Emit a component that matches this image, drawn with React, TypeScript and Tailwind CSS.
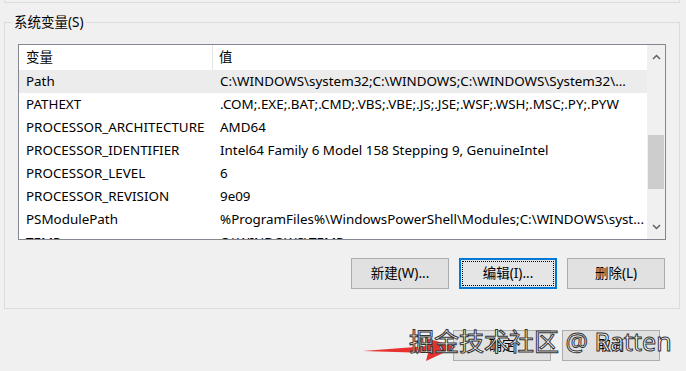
import React from "react";

const rows: [string, string][] = [
  ["Path", "C:\\WINDOWS\\system32;C:\\WINDOWS;C:\\WINDOWS\\System32\\..."],
  ["PATHEXT", ".COM;.EXE;.BAT;.CMD;.VBS;.VBE;.JS;.JSE;.WSF;.WSH;.MSC;.PY;.PYW"],
  ["PROCESSOR_ARCHITECTURE", "AMD64"],
  ["PROCESSOR_IDENTIFIER", "Intel64 Family 6 Model 158 Stepping 9, GenuineIntel"],
  ["PROCESSOR_LEVEL", "6"],
  ["PROCESSOR_REVISION", "9e09"],
  ["PSModulePath", "%ProgramFiles%\\WindowsPowerShell\\Modules;C:\\WINDOWS\\syst..."],
  ["TEMP", "C:\\WINDOWS\\TEMP"],
];

function Btn({ label, focused }: { label: string; focused?: boolean }) {
  if (focused) {
    return (
      <div className="w-[98px] h-[31px] border-2 border-[#0078d7] bg-[#e5e5e5] p-[1px]">
        <div className="w-full h-full border border-dotted border-black flex items-center justify-center text-[13.5px] text-black">
          {label}
        </div>
      </div>
    );
  }
  return (
    <div className="w-[98px] h-[31px] border border-[#adadad] bg-[#e1e1e1] flex items-center justify-center text-[13.5px] text-black">
      {label}
    </div>
  );
}

export default function App() {
  return (
    <div
      className="relative w-[686px] h-[371px] overflow-hidden bg-[#f0f0f0] text-black"
      style={{ fontFamily: '"Noto Sans", "Noto Sans CJK SC", sans-serif' }}
    >
      {/* previous group box bottom edge */}
      <div className="ml-[4px] w-[676px] h-[3px] border-x border-b border-[#dcdcdc]" />

      {/* system variables group */}
      <div className="relative mt-[19px] ml-[4px] w-[676px] h-[287px] border border-[#dcdcdc]">
        <div className="absolute left-[7px] top-[-12px] px-[2px] bg-[#f0f0f0] text-[13.5px] leading-[22px]">
          系统变量(S)
        </div>
        <div className="pl-[13px] pt-[21px]">
          <div className="flex w-[648px] h-[196px] border border-[#828790] bg-white overflow-hidden">
            <div className="flex-1 min-w-0 flex flex-col overflow-hidden">
              <div className="flex h-[25px] shrink-0 text-[13.4px] items-center">
                <div className="w-[194px] shrink-0 pl-[7px] h-full flex items-center border-r border-[#e5e5e5]">变量</div>
                <div className="pl-[6px]">值</div>
              </div>
              {rows.map(([k, v], i) => (
                <div
                  key={k}
                  className={
                    i === 0
                      ? "flex h-[23px] shrink-0 items-center text-[13.4px] bg-[#ececec] whitespace-nowrap"
                      : "flex h-[23px] shrink-0 items-center text-[13.4px] whitespace-nowrap"
                  }
                >
                  <div className="w-[194px] shrink-0 pl-[7px] overflow-hidden">{k}</div>
                  <div className="w-[434px] shrink-0 pl-[7px] overflow-hidden">{v}</div>
                </div>
              ))}
            </div>
            {/* scrollbar */}
            <div className="w-[18px] shrink-0 bg-[#f0f0f0] flex flex-col items-center">
              <div className="h-[24px] w-full flex items-center justify-center">
                <svg width="9" height="6" viewBox="0 0 9 6">
                  <path d="M1 5 L4.5 1.5 L8 5" fill="none" stroke="#606060" strokeWidth="1.5" />
                </svg>
              </div>
              <div className="mt-[66px] w-[16px] h-[54px] bg-[#cdcdcd]" />
              <div className="flex-1" />
              <div className="h-[24px] w-full flex items-center justify-center">
                <svg width="9" height="6" viewBox="0 0 9 6">
                  <path d="M1 1 L4.5 4.5 L8 1" fill="none" stroke="#606060" strokeWidth="1.5" />
                </svg>
              </div>
            </div>
          </div>
          <div className="mt-[18px] flex gap-[10px] pl-[333px]">
            <Btn label="新建(W)..." />
            <Btn label="编辑(I)..." focused />
            <Btn label="删除(L)" />
          </div>
        </div>
      </div>

      {/* dialog buttons */}
      <div className="mt-[21px] flex gap-[11px] pl-[453px]">
        <Btn label="确定" />
        <Btn label="取消" />
      </div>

      {/* red arrow annotation */}
      <svg className="absolute left-[360px] top-[334px]" width="100" height="30" viewBox="0 0 100 30">
        <polygon points="3,17 68,12 66,4 96,13 66,27 68,19" fill="#e8312f" />
      </svg>

      {/* watermark */}
      <div
        className="absolute left-[409px] top-[324px] text-[25px] leading-[34px] text-white whitespace-nowrap"
        style={{
          WebkitTextStroke: "1px #333",
          fontFamily: '"Noto Sans", "Noto Sans CJK SC", sans-serif',
        }}
      >
        掘金技术社区 @ Ratten
      </div>
    </div>
  );
}
